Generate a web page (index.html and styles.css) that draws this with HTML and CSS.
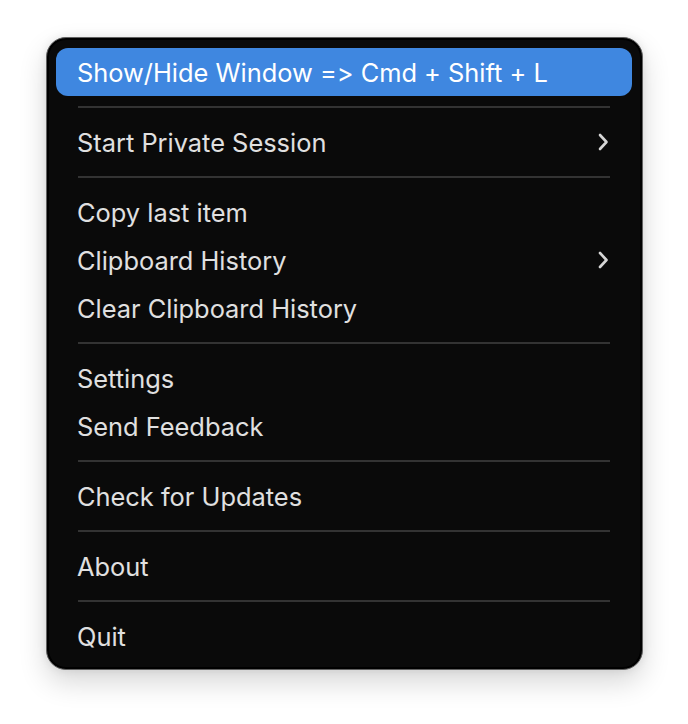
FILE: index.html
```html
<!DOCTYPE html>
<html lang="en">
<head>
<meta charset="utf-8">
<link rel="stylesheet" href="styles.css">
</head>
<body>
<div class="stage">
  <div class="menu">
    <div class="item active">Show/Hide Window =&gt; Cmd + Shift + L</div>
    <div class="sep"></div>
    <div class="item"><span>Start Private Session</span>
      <svg class="chev" viewBox="0 0 12 20" width="12" height="20"><path d="M3 3 L9.5 10 L3 17" fill="none" stroke="currentColor" stroke-width="2.6" stroke-linecap="round" stroke-linejoin="round"/></svg>
    </div>
    <div class="sep"></div>
    <div class="item">Copy last item</div>
    <div class="item"><span>Clipboard History</span>
      <svg class="chev" viewBox="0 0 12 20" width="12" height="20"><path d="M3 3 L9.5 10 L3 17" fill="none" stroke="currentColor" stroke-width="2.6" stroke-linecap="round" stroke-linejoin="round"/></svg>
    </div>
    <div class="item">Clear Clipboard History</div>
    <div class="sep"></div>
    <div class="item">Settings</div>
    <div class="item">Send Feedback</div>
    <div class="sep"></div>
    <div class="item">Check for Updates</div>
    <div class="sep"></div>
    <div class="item">About</div>
    <div class="sep"></div>
    <div class="item">Quit</div>
  </div>
</div>
</body>
</html>
```

FILE: styles.css
```css
* { box-sizing: border-box; }
html, body {
  margin: 0;
  padding: 0;
  background: #ffffff;
}
.stage {
  width: 688px;
  height: 724px;
  padding: 37px 0 0 46px;
}
.menu {
  width: 597px;
  height: 633px;
  background: #0a0a0a;
  border: 1px solid #626262;
  border-radius: 20px;
  box-shadow: inset 0 0 0 2px #000, 0 12px 28px rgba(0, 0, 0, 0.16), 0 0 10px rgba(0, 0, 0, 0.08);
  padding: 10px 10px 0 9px;
  font-family: Inter, "Noto Sans", sans-serif;
  font-size: 25.4px;
  font-feature-settings: "liga" 0, "calt" 0;
  font-variant-ligatures: none;
  color: #e0e0e0;
  display: flex;
  flex-direction: column;
}
.item {
  height: 48px;
  padding: 0 23px 0 21px;
  display: flex;
  align-items: center;
  justify-content: space-between;
  border-radius: 12px;
  white-space: nowrap;
}
.item.active {
  background: #3f87e0;
  color: #ffffff;
}
.chev {
  color: #d6d6d6;
}
.sep {
  height: 2px;
  margin: 10px 22px 10px 22px;
  background: #333333;
}
```
